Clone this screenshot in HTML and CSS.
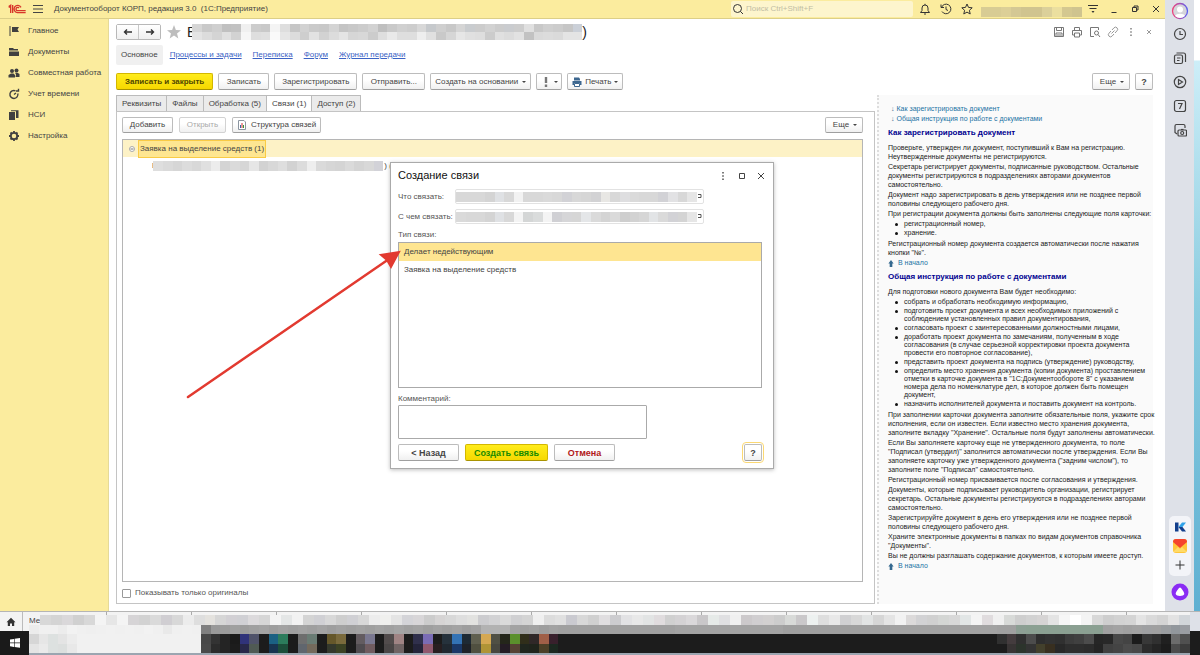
FILE: index.html
```html
<!DOCTYPE html>
<html lang="ru">
<head>
<meta charset="utf-8">
<title>Документооборот КОРП</title>
<link rel="stylesheet" href="styles.css">
</head>
<body>
<div class="screen">
  <div class="workspace">
    <div class="app">
      <header class="topbar">
        <svg class="logo" viewBox="0 0 54 30" fill="none" stroke="#d8352a" stroke-width="4"><path d="M2 8l6-4v23M14 27V3M2 9h4"/><path d="M39 10a11 11 0 1 0-11 16h25"/><path d="M33 12a5 5 0 1 0-5 8h25"/></svg>
        <button class="icon-btn" aria-label="Меню"><svg class="i12" viewBox="0 0 12 12" stroke="#444" fill="none"><path d="M1 2.500h10M1 6h10M1 9.500h10"/></svg></button>
        <h1 class="app-title">Документооборот КОРП, редакция 3.0&nbsp; (1С:Предприятие)</h1>
        <label class="search"><svg class="i12" viewBox="0 0 12 12" stroke="#333" fill="none"><circle cx="5.500" cy="5.500" r="4"/><path d="M8.500 8.500l2.500 2.500"/></svg><input type="text" placeholder="Поиск Ctrl+Shift+F" aria-label="Поиск"></label>
        <div class="top-icons">
          <button class="icon-btn" aria-label="Уведомления"><svg class="i12" viewBox="0 0 12 12" stroke="#333" fill="none"><path d="M1.500 9.500h9L9 7.500V5a3 3 0 0 0-6 0v2.500zM6 .8V2M5 11h2"/></svg></button>
          <button class="icon-btn" aria-label="История"><svg class="i12" viewBox="0 0 12 12" stroke="#333" fill="none"><path d="M1.500 4.500A4.800 4.800 0 1 1 2 8.500M1 1.500v3h3M6 3.500v3l2 1"/></svg></button>
          <button class="icon-btn" aria-label="Избранное"><svg class="i12" viewBox="0 0 12 12" stroke="#333" fill="none"><path d="M6 1l1.500 3.400 3.700.4-2.800 2.500.8 3.700L6 9.100 2.800 11l.8-3.700L.8 4.800l3.700-.4z"/></svg></button>
        </div>
        <div class="mosaic user" data-rows="d8cc94 d8cc94 dccf97 d4c894 d0c48f d0c48f dbd09a ebdf9f d4c890 cfc48f"></div>
        <div class="win-icons">
          <button class="icon-btn" aria-label="Настройки"><svg class="i12" viewBox="0 0 12 12" stroke="#333" fill="#333"><path d="M1 2.500h10M2.500 5.500h7"/><path d="M4.500 8h3L6 10z" stroke="none"/></svg></button>
          <button class="icon-btn" aria-label="Свернуть"><svg class="i12" viewBox="0 0 12 12" stroke="#333" fill="none"><path d="M3.500 9.500h5"/></svg></button>
          <button class="icon-btn" aria-label="Восстановить"><svg class="i12" viewBox="0 0 12 12" stroke="#333" fill="none"><path d="M3.500 4.500h4v4h-4zM5 4V3h4v4H8"/></svg></button>
          <button class="icon-btn" aria-label="Закрыть"><svg class="i12" viewBox="0 0 12 12" stroke="#333" fill="none"><path d="M3 3l6 6M9 3l-6 6"/></svg></button>
        </div>
      </header>

      <div class="app-body">
        <nav class="sections">
          <a href="#"><svg class="i12" viewBox="0 0 12 12" fill="#404040"><path d="M1.500 1h1v10h-1zM4 2h7L9.500 4.500 11 7H4z"/></svg>Главное</a>
          <a href="#"><svg class="i12" viewBox="0 0 12 12" fill="#404040"><path d="M1 2h4l1 1h4v1.500H1zM1 5.500h10V10H1z"/></svg>Документы</a>
          <a href="#"><svg class="i12" viewBox="0 0 12 12" fill="#404040"><circle cx="4" cy="4" r="2"/><circle cx="8.500" cy="3.500" r="2"/><path d="M.5 10.500V8L3 6.500h2.500L7 8v2.500zM7.500 10h4V7L9.500 5.800H7L8 7.500z"/></svg>Совместная работа</a>
          <a href="#"><svg class="i12" viewBox="0 0 12 12" fill="none" stroke="#404040" stroke-width="1.400"><path d="M9.800 5.500A4 4 0 1 1 7.500 2.800M6 6.500L8 5M8 3h2.500V.8"/></svg>Учет времени</a>
          <a href="#"><svg class="i12" viewBox="0 0 12 12" fill="#404040"><path d="M1 3h6v8H1zM3 1.200h7.500V9H8V2.200H3z"/></svg>НСИ</a>
          <a href="#"><svg class="i12" viewBox="0 0 12 12" fill="none" stroke="#404040"><circle cx="6" cy="6" r="3.200" stroke-width="1.800"/><path stroke-width="1.800" d="M6 1v1.500M6 9.500V11M1 6h1.500M9.500 6H11M2.500 2.500l1 1M8.500 8.500l1 1M9.500 2.500l-1 1M3.500 8.500l-1 1"/></svg>Настройка</a>
        </nav>

        <main class="document">
          <div class="doc-head">
            <div class="history"><button aria-label="Назад"><svg class="i10" viewBox="0 0 10 10" stroke="#333" stroke-width="1.400" fill="none"><path d="M9 5H1.500M4 2.500L1.500 5 4 7.500"/></svg></button><button aria-label="Вперед"><svg class="i10" viewBox="0 0 10 10" stroke="#333" stroke-width="1.400" fill="none"><path d="M1 5h7.500M6 2.500L8.500 5 6 7.500"/></svg></button></div>
            <svg class="star" viewBox="0 0 12 12" fill="#bdbdbd"><path d="M6 0l1.600 4.200 4.400.2-3.400 2.800 1.100 4.300L6 9.100l-3.700 2.400 1.100-4.300L0 4.400l4.400-.2z"/></svg>
            <h2 class="doc-title"><span>В</span><span class="mosaic title-mask" data-rows="d6d6d6 c9c9c9 cfcfcf c0c0c0 c2c2c2 f0f0f0 cccccc c9c9c9 f4f4f4 dedede c6c6c6 d2d2d2 cacaca c8c8c8 d4d4d4 c4c4c4 c8c8c8 cccccc d2d2d2 bfbfbf c9c9c9 d0d0d0 cdcdcd d8d8d8 c6c9cc cfcfcf c8c8c8 d5d5d5 c9cccf cccccc d2d2d2 cccccc cacccf cdcdcd e0e0e0 c8c8c8 cfcfcf cccccc c6c6c6 cbd0d8|e4e4e4 dcdcdc d4d4d4 e0e0e0 d2d2d2 f6f6f6 dedede e0e0e0 fafafa e6e6e6 dcdcdc cecece e2e2e2 d2d2d2 dcdcdc e4e4e4 d6d6d6 d8d8d8 cccccc dedede e9e9e9 dedede dedede eeeeee e0e0e0 c9c9c9 d6d6d6 e6e6e6 e0e0e0 dedede cccccc e0e0e0 dcdcdc e2e2e2 c2c2c2 dadada dcdcdc dadada e4e4e4 e4e4e4"></span><span>)</span></h2>
            <div class="doc-icons">
              <button class="icon-btn" aria-label="Сохранить"><svg class="i12" viewBox="0 0 12 12" stroke="#777" fill="none"><path d="M1.500 1.500h9v9h-9zM3.500 1.500v3h5v-3M3 10.500V7h6v3.500M4 9h4"/></svg></button>
              <button class="icon-btn" aria-label="Печать"><svg class="i12" viewBox="0 0 12 12" stroke="#777" fill="none"><path d="M3.500 4V1.500h5V4M3 9H1.500V4.500h9V9H9M3.500 7h5v4h-5z"/></svg></button>
              <button class="icon-btn" aria-label="Просмотр"><svg class="i12" viewBox="0 0 12 12" stroke="#777" fill="none"><path d="M5 10.500H1.500v-9h8V4"/><circle cx="7.500" cy="7" r="2"/><path d="M9 8.500l2 2.500"/></svg></button>
              <button class="icon-btn" aria-label="Ссылка"><svg class="i12" viewBox="0 0 12 12" stroke="#999" fill="none"><path d="M5 4l2-2.200a2 2 0 0 1 3 3L8 7M7 8l-2 2.200a2 2 0 0 1-3-3L4 5M4.500 7.500l3-3"/></svg></button>
              <button class="icon-btn" aria-label="Еще"><svg class="i12" viewBox="0 0 12 12" fill="#777"><path d="M5.300 2h1.400v1.400H5.300zM5.300 5.300h1.400v1.400H5.300zM5.300 8.600h1.400V10H5.300z"/></svg></button>
              <button class="icon-btn" aria-label="Закрыть документ"><svg class="i12" viewBox="0 0 12 12" stroke="#999" fill="none"><path d="M4 4l4 4M8 4l-4 4"/></svg></button>
            </div>
          </div>

          <nav class="links">
            <span class="current">Основное</span><a href="#">Процессы и задачи</a><a href="#">Переписка</a><a href="#">Форум</a><a href="#">Журнал передачи</a>
          </nav>

          <div class="commands">
            <button class="btn primary">Записать и закрыть</button>
            <button class="btn w-s">Записать</button>
            <button class="btn w-l">Зарегистрировать</button>
            <button class="btn w-m">Отправить...</button>
            <button class="btn tight">Создать на основании<i class="caret"></i></button>
            <button class="btn tight flag" aria-label="Важность"><svg class="i10" viewBox="0 0 10 10" fill="#777"><path d="M3.800 0h2.400v6H3.800zM3.800 7.500h2.400V10H3.800z"/></svg><i class="caret"></i></button>
            <button class="btn tight print"><svg class="i10" viewBox="0 0 10 10" fill="#3d678f"><path d="M2 .5h5L8 2v1.500H2zM.5 4h9v4H8V6H2v2H.5z"/><path d="M2.500 6.500h5v3h-5z" fill="#fff" stroke="#3d678f"/></svg>Печать<i class="caret"></i></button>
            <span class="grow"></span>
            <button class="btn tight more">Еще<i class="caret"></i></button>
            <button class="btn help-btn">?</button>
          </div>

          <div class="columns">
            <section class="pages">
              <div class="tabs" role="tablist">
                <button role="tab">Реквизиты</button><button role="tab">Файлы</button><button role="tab">Обработка (5)</button><button role="tab" class="active" aria-selected="true">Связи (1)</button><button role="tab">Доступ (2)</button>
              </div>
              <div class="page">
                <div class="page-tools">
                  <button class="btn w-s">Добавить</button>
                  <button class="btn w-xs" disabled>Открыть</button>
                  <button class="btn tight"><svg class="i10" viewBox="0 0 10 10" fill="none"><path d="M1.500.5H7L8.500 2v7.500h-7z" fill="#fff" stroke="#8b95a0"/><path d="M3.500 8V5" stroke="#3566a8"/><path d="M5 8V3" stroke="#c33"/><path d="M6.500 8V5" stroke="#393"/></svg>Структура связей</button>
                  <span class="grow"></span>
                  <button class="btn tight more">Еще<i class="caret"></i></button>
                </div>
                <div class="tree">
                  <div class="tree-row"><svg class="collapse" viewBox="0 0 8 8" fill="#fff" stroke="#aaa"><circle cx="4" cy="4" r="2.500"/><path d="M2.500 4h3" stroke="#777"/></svg><span class="group">Заявка на выделение средств (1)</span></div>
                  <div class="tree-child"><span>В</span><span class="mosaic child-mask" data-rows="dedede dadada d6d6d6 dcdcdc d8d8d8 e0e0e0 ececec d4d4d4 dadada d6d6d6 e6e6e6 d2d2d2 d8d8d8 dedede d2d2d2 dcdcdc eeeeee dadada d6d6d6 d4d4d4 dadada d4d4d4 d8d8d8 d2d2d8"></span><span>) (До</span></div>
                </div>
                <label class="check"><input type="checkbox">Показывать только оригиналы</label>
              </div>
            </section>

            <aside class="help">
              <ul class="toc"><li><a href="#how">Как зарегистрировать документ</a></li><li><a href="#common">Общая инструкция по работе с документами</a></li></ul>
              <h3 id="how">Как зарегистрировать документ</h3>
              <p>Проверьте, утвержден ли документ, поступивший к Вам на регистрацию.<br>Неутвержденные документы не регистрируются.</p>
              <p>Секретарь регистрирует документы, подписанные руководством. Остальные<br>документы регистрируются в подразделениях авторами документов<br>самостоятельно.</p>
              <p>Документ надо зарегистрировать в день утверждения или не позднее первой<br>половины следующего рабочего дня.</p>
              <p>При регистрации документа должны быть заполнены следующие поля карточки:</p>
              <ul class="list"><li>регистрационный номер,</li><li>хранение.</li></ul>
              <p>Регистрационный номер документа создается автоматически после нажатия<br>кнопки "№".</p>
              <a class="up" href="#"><svg viewBox="0 0 6 8" fill="#35698f"><path d="M3 0l3 4H4.500v4h-3V4H0z"/></svg>В начало</a>
              <h3 id="common">Общая инструкция по работе с документами</h3>
              <p>Для подготовки нового документа Вам будет необходимо:</p>
              <ul class="list">
                <li>собрать и обработать необходимую информацию,</li>
                <li>подготовить проект документа и всех необходимых приложений с<br>соблюдением установленных правил документирования,</li>
                <li>согласовать проект с заинтересованными должностными лицами,</li>
                <li>доработать проект документа по замечаниям, полученным в ходе<br>согласования (в случае серьезной корректировки проекта документа<br>провести его повторное согласование),</li>
                <li>представить проект документа на подпись (утверждение) руководству,</li>
                <li>определить место хранения документа (копии документа) проставлением<br>отметки в карточке документа в "1С:Документообороте 8" с указанием<br>номера дела по номенклатуре дел, в которое должен быть помещен<br>документ,</li>
                <li>назначить исполнителей документа и поставить документ на контроль.</li>
              </ul>
              <p>При заполнении карточки документа заполните обязательные поля, укажите срок<br>исполнения, если он известен. Если известно место хранения документа,<br>заполните вкладку "Хранение". Остальные поля будут заполнены автоматически.</p>
              <p>Если Вы заполняете карточку еще не утвержденного документа, то поле<br>"Подписал (утвердил)" заполнится автоматически после утверждения. Если Вы<br>заполняете карточку уже утвержденного документа ("задним числом"), то<br>заполните поле "Подписал" самостоятельно.</p>
              <p>Регистрационный номер присваивается после согласования и утверждения.</p>
              <p>Документы, которые подписывает руководитель организации, регистрирует<br>секретарь. Остальные документы регистрируются в подразделениях авторами<br>самостоятельно.</p>
              <p>Зарегистрируйте документ в день его утверждения или не позднее первой<br>половины следующего рабочего дня.</p>
              <p>Храните электронные документы в папках по видам документов справочника<br>"Документы".</p>
              <p>Вы не должны разглашать содержание документов, к которым имеете доступ.</p>
              <a class="up" href="#"><svg viewBox="0 0 6 8" fill="#35698f"><path d="M3 0l3 4H4.500v4h-3V4H0z"/></svg>В начало</a>
            </aside>
          </div>
        </main>
      </div>

      <section class="dialog" role="dialog" aria-labelledby="dlg-title">
        <div class="dlg-head">
          <h2 id="dlg-title">Создание связи</h2>
          <button class="icon-btn" aria-label="Еще"><svg class="i12" viewBox="0 0 12 12" fill="#444"><path d="M5.300 2h1.400v1.400H5.300zM5.300 5.300h1.400v1.400H5.300zM5.300 8.600h1.400V10H5.300z"/></svg></button>
          <button class="icon-btn" aria-label="Развернуть"><svg class="i12" viewBox="0 0 12 12" fill="none" stroke="#444"><path d="M3.500 3.500h5v5h-5z"/></svg></button>
          <button class="icon-btn" aria-label="Закрыть"><svg class="i12" viewBox="0 0 12 12" fill="none" stroke="#444"><path d="M3 3l6 6M9 3l-6 6"/></svg></button>
        </div>
        <div class="dlg-fields">
          <span>Что связать:</span>
          <div class="field"><div class="mosaic field-mask" data-rows="d8d8d8 d8d8d8 d8d8d8 d4d4d4 dfe1e4 d8d8d8 f2f2f2 d8d8d8 d8d8d8 dadada d8d8d8 d2d2d6 d8d8d8 d6d6d6 d2d2d4 e8e7e4 d8d8d8 dedee0 dadada d8d8d8 d8d8d8 d2d2d6 e2e2e4 d8d8d8 e6e6e6"></div><svg class="open" viewBox="0 0 6 8" fill="none" stroke="#555"><path d="M1 1.500h3v3H1"/></svg></div>
          <span>С чем связать:</span>
          <div class="field"><div class="mosaic field-mask" data-rows="dadada d8d8d8 d8d8d8 d4d4d4 dfe1e4 d8d8d8 f4f4f4 d4d6d6 dadcdc f4f4f4 d0d0d4 d6d6d8 d6d6d6 e4e6e8 dadada d4d4d4 dadada cecece d2d2d2 d6d6d6 e2e4e6 dadada d2d2d6 d4d4d4 e6e6e6"></div><svg class="open" viewBox="0 0 6 8" fill="none" stroke="#555"><path d="M1 1.500h3v3H1"/></svg></div>
        </div>
        <div class="dlg-label">Тип связи:</div>
        <ul class="types" role="listbox"><li role="option" aria-selected="true">Делает недействующим</li><li role="option">Заявка на выделение средств</li></ul>
        <label class="dlg-label" for="comment">Комментарий:</label>
        <textarea id="comment"></textarea>
        <div class="dlg-actions">
          <button class="btn wide">&lt; Назад</button>
          <button class="btn primary create">Создать связь</button>
          <button class="btn wide cancel">Отмена</button>
          <span class="grow"></span>
          <button class="btn help-btn focused">?</button>
        </div>
      </section>
      <svg class="pointer" viewBox="0 0 220 154"><path d="M4 149L205 11" stroke="#e23a30" stroke-width="2.500" stroke-linecap="round"/><path d="M215 4l-8 15-4-7-6-5z" fill="#e23a30" stroke="#e23a30" stroke-width="2"/></svg>
    </div>

    <aside class="browser">
      <svg class="avatar" viewBox="0 0 18 18"><defs><linearGradient id="ring"><stop offset="0" stop-color="#f0427a"/><stop offset="1" stop-color="#5b5ff0"/></linearGradient></defs><circle cx="9" cy="9" r="7.500" fill="#d5d5da" stroke="url(#ring)" stroke-width="1.300"/><circle cx="9" cy="7.500" r="3" fill="#fff"/><path d="M4 14c1-3 9-3 10 0-3 2.500-7 2.500-10 0z" fill="#fff"/></svg>
      <svg class="i14" viewBox="0 0 14 14" fill="none" stroke="#444" stroke-width="1.200"><circle cx="7" cy="7" r="5.500"/><path d="M7 4v3.500h3"/></svg>
      <svg class="i14" viewBox="0 0 14 14" fill="none" stroke="#444" stroke-width="1.200"><rect x="1.500" y="4" width="8" height="8.500" rx="1.500"/><path d="M3.500 2h7q2 0 2 2v7M4 7h3.500M4 9.500h2.500"/></svg>
      <svg class="i14" viewBox="0 0 14 14" fill="none" stroke="#444" stroke-width="1.200"><circle cx="7" cy="7" r="5.700"/><path d="M5.500 4.500v5L9.500 7z"/></svg>
      <svg class="i14" viewBox="0 0 14 14" fill="none" stroke="#444" stroke-width="1.200"><rect x="1.500" y="1.500" width="11" height="11" rx="2"/><path d="M5 4.500h4L6.500 10"/></svg>
      <svg class="i14" viewBox="0 0 14 14" fill="none" stroke="#444" stroke-width="1.200"><path d="M4 11l-2-1.500V3q0-1.500 1.500-1.500h7Q12 1.500 12 3v2"/><rect x="5" y="7" width="8.500" height="6" rx="1"/><circle cx="9.200" cy="10" r="1.500"/><path d="M8 6.500h2.500"/></svg>
      <span class="grow"></span>
      <div class="dock">
        <svg class="i12" viewBox="0 0 12 12"><path d="M1 1.500h3.500v9H1z" fill="#123e8c"/><path d="M8 1.500h4L8.500 6H4.500z" fill="#2fa1e8"/><path d="M4.500 6h4l3.500 4.500H8z" fill="#123e8c"/></svg>
        <svg class="i16" viewBox="0 0 16 16"><rect x="1" y="1" width="14" height="14" rx="3" fill="#ffc53a"/><path d="M1 4q0-3 3-3h8q3 0 3 3L8 10z" fill="#f5442d"/><path d="M1 14l5-5 2 2 2-2 5 5z" fill="#ffdb68"/></svg>
        <svg class="i12" viewBox="0 0 12 12" stroke="#333"><path d="M6 1.500v9M1.500 6h9"/></svg>
      </div>
      <svg class="avatar" viewBox="0 0 18 18"><circle cx="9" cy="9" r="8.500" fill="#8a2cf4"/><path d="M9 4.500c1.200 0 4.500 5 4.300 6.500-.3 2.600-8.300 2.600-8.600 0C4.500 9.500 7.800 4.500 9 4.500z" fill="#fff"/></svg>
    </aside>
    <div class="desktop"></div>
  </div>

  <footer class="bottom">
    <div class="corner">
      <button class="home" aria-label="Начальная страница"><svg class="i10" viewBox="0 0 10 10" fill="#333"><path d="M5 .8l4.500 4.400H8.200V9H6V6.500H4V9H1.800V5.200H.5z"/></svg></button>
      <button class="start" aria-label="Пуск"><svg class="i12" viewBox="0 0 12 12" fill="#fff"><path d="M1 2.500l4-.6v3.700H1zM5.600 1.800L11 1v4.600H5.600zM1 6.200h4v3.700l-4-.6zM5.600 6.200H11v4.600l-5.400-.8z"/></svg></button>
    </div>
    <div class="bars">
      <div class="windows"><span class="window-name">Ме</span><div class="mosaic windows-mask" data-rows="d8d8d8 d4d4d4 dad8da d0d0d0 d8d8d8 f4f4f4 e6e6e6 f4f4f4 d6d4d6 d2d2d2 dadada d0ced2 d8d8d8 ececec dedede e4e2de d6d6d6 d2d0d4 d0d0d4 dcdadc d6d6d6 f4f4f4 e4e6e6 f2f2f2 d4d4d4 d0d0d4 d8d8d8 cecece d0d0d4 d8d8d8 ececec f0f0ee e4e4e4 d4d4d8 d8d6d8 cccccc d6d4d4 d8d8d8 dedede e2e2e0 cccccf d2d2d4 dadada d0d0d2 d4d4d4 f0f0f0 dcdcdc e0e0e0 cacad0 d8d8d8 d0d0d0 e0dee0 cccccf e2e2e4 e8e8e8 e2e4e4 e0dcde d0d0d0 d4d2d4 dad8da c9c7c9 e6eae8 e0e0e2 f0f0f0 ccc9cb d0ced0 d2d0d0 cccccc d8dad8 cac8ca edf1f0 dedede e8e8e8 d0d0d2 d8d8d8 e2e4e4 d6d6d6 e4e4e4 f2f2f2 dcdada d2d2d4 d0d0d0 d4d6d4 d8d8d8 e2e6e6 f4f4f4 e0dcde f0f0f0 d8dad8 cecece d2d2d2 d6d4d4 e4e4e4 f6f6f6 ffffff f4f4f4 d8d8d8 cecece d2d2d2 d4d4d4 e4e4e4 dadada d4d4d4 e2e2e2 d2d6da"></div></div>
      <div class="taskbar">
        <div class="mosaic task-search" data-rows="ececec f0f0f0 f0f0f0 ececec f2f2f2 f0f0f0 efefef f0f0f0 f1f1f1 f0f0f0 f1f1f1 f0f0f0 f2f2f2 f0f0f0 e9e9e9 f0f0f0 f1f1f1 f0f0f0|d6d6d6 e6e6e6 dde1e0 e4e4e4 ececec f1f1f1 f1f1f1 f1f1f1 f1f1f1 f1f1f1 f1f1f1 f1f1f1 f1f1f1 f1f1f1 f1f1f1 f1f1f1 f1f1f1 f1f1f1|e4e4e4 eaeaea dde1e0 dcdfde e8e8e8 f1f1f1 f1f1f1 f1f1f1 f1f1f1 f1f1f1 f1f1f1 f1f1f1 f1f1f1 f1f1f1 f1f1f1 f1f1f1 f1f1f1 f1f1f1"></div>
        <div class="mosaic task-apps" data-rows="808080 999999 9c9c9c a0a0a0 9c9c9c a0a0a0 a3a3a3 9e9e9e a2a2a2 9f9f9f a2a2a2 9f9f9f a3a3a3 9e9e9e a2a2a2 9f9f9f a2a2a2 9f9f9f a3a3a3 a0a0a0 a4a4a4 a0a0a0 a3a3a3 9f9f9f a3a3a3 a0a0a0 a3a3a3 9e9e9e a2a2a2 b2b2b2 b2b2b2 b2b2b2 a3a3a3 a0a0a0 a3a3a3 9e9e9e a2a2a2 a0a0a0|484848 333333 242424 1a1a1a 30337a 50536a 1c1c1c 1b6183 2c7c5c 1b1b1b 6e6e6e 6a7c74 1c1c1c 65572a 7a6a3c 1c1c1c 635c60 7a7890 1c1c1c 524c4c a08484 1c1c1c 30304c 7a6cb5 1c1c1c 26323c 3373b5 1e2a34 606050 d5a852 505044 24261a 5b902c 302e1a 302828 a05f48 38202c 1c1c1c|4a4a4a 2c2c2c 242424 1c1c1c 28284a 505a54 1c1c1c 183450 1c4e3a 1b1b1b 60666e 746a5c 1c1c1c 34382c 3c4224 1c1c1c 504c50 705c60 1c1c1c 4a4646 706464 1c1c1c 24243a 90586e 281e20 202830 1a3868 1e2228 505040 b09436 484840 241c24 564234 20261e 20241c 4c4028 1c2820 1c1c1c"></div>
        <div class="mosaic task-empty" data-rows="a0a0a0 a3a3a3 9f9f9f a2a2a2|1c1c1c 1c1c1c 1c1c1c 1c1c1c|1c1c1c 1c1c1c 1c1c1c 1c1c1c"></div>
        <div class="mosaic task-tray" data-rows="a0a0a0 a0a0a0 8d9f94 8ba092 8ba092 8ba092 8ba092 8ba092 8ba092 8ba092 8ba092 a0a0a0 a3a3a3 a0a0a0 a2a2a2 9fa0a2 a0a0a0 9a9da0 92979c 9a9da2|303030 443c3e 303030 4c4c4c 2e2e2e 323232 303030 3c3c3c 404040 4c4c4c 262626 282828 484848 444444 1c1c1c 383838 303030 202020 6c6c6c 505050|1c1c1c 383434 2c342c 343434 43402c 382f20 282828 2e2e2e 2e2e2e 2c2c2c 242424 404040 444444 4c4c4c 484848 2c2c2c 242424 1c1c1c 4c4c4c 3c3c3c"></div>
      </div>
    </div>
    <div class="edge"></div>
  </footer>
</div>
<script src="mosaic.js"></script>
</body>
</html>
```

FILE: styles.css
```css
* { box-sizing: border-box; }
body { margin: 0; font: 8px/10px "Liberation Sans", Arial, sans-serif; color: #444; background: #fff; }
button, input, textarea { font: inherit; color: inherit; }
button { padding: 0; cursor: pointer; }
h1, h2, h3, p, ul { margin: 0; padding: 0; font-weight: normal; }
ul { list-style: none; }
svg { display: block; flex: none; }
.grow { flex: 1; }
.i10 { width: 10px; height: 10px; }
.i12 { width: 12px; height: 12px; }
.i14 { width: 14px; height: 14px; }
.i16 { width: 16px; height: 16px; }
.icon-btn { border: 0; background: none; }

.screen { min-height: 100vh; display: flex; flex-direction: column; }
.workspace { flex: 1; display: flex; }
.app { flex: 1; min-width: 0; position: relative; display: flex; flex-direction: column; }
.app-body { flex: 1; display: flex; }

/* blurred-out private data */
.mosaic { display: flex; flex-direction: column; overflow: hidden; }
.mosaic-row { flex: 1; display: flex; }
.mosaic-row i { flex: 1; }

.topbar { height: 19px; display: flex; align-items: center; background: #fbec9e; border-bottom: 1px solid #dccf88; padding: 0 3px 0 8px; }
.logo { width: 18px; height: 10px; margin-right: 6px; }
.app-title { font-size: 8px; margin-left: 10px; flex: 1; }
.search { display: flex; align-items: center; gap: 2px; flex: none; width: 182px; height: 16px; padding-left: 1px; background: #fdf5cd; border-radius: 2px; }
.search input { border: 0; background: none; flex: 1; min-width: 0; padding: 0; outline: 0; }
.search input::placeholder { color: #c2bda4; opacity: 1; }
.top-icons { display: flex; gap: 9px; margin: 0 8px 0 6px; }
.user { width: 101px; height: 10px; margin-top: 6px; }
.win-icons { display: flex; gap: 9px; margin-left: 5px; }

.sections { width: 109px; padding: 1px 0 0 8px; background: #fbec9e; border-right: 1px solid #e5da98; }
.sections a { display: flex; align-items: center; gap: 8px; height: 21px; color: #444; text-decoration: none; }

.document { flex: 1; min-width: 0; display: flex; flex-direction: column; padding: 4px 12px 7px 7px; }
.doc-head { display: flex; align-items: center; height: 17px; }
.history { display: flex; width: 45px; height: 16px; border: 1px solid #b8b8b8; border-radius: 2px; }
.history button { flex: 1; display: flex; align-items: center; justify-content: center; border: 0; background: linear-gradient(#fff, #f0f0f0); }
.history button + button { border-left: 1px solid #c8c8c8; }
.star { width: 14px; height: 14px; margin: 0 6px; }
.doc-title { display: flex; align-items: center; flex: 1; color: #222; font-size: 14px; line-height: 16px; }
.title-mask { width: 390px; height: 16px; margin-left: -4px; }
.doc-icons { display: flex; gap: 6px; margin-right: -2px; }

.links { display: flex; align-items: center; gap: 11px; height: 20px; margin-top: 5px; }
.links a { color: #3b62c4; }
.current { background: #f0f0f0; border-radius: 2px; padding: 5px; margin-right: -4px; }

.commands { display: flex; gap: 5px; margin-top: 8px; height: 17px; }
.btn { display: inline-flex; align-items: center; justify-content: center; gap: 4px; height: 17px; padding: 0 8px; border: 1px solid #bcbcbc; border-bottom-color: #9f9f9f; border-radius: 2px; background: linear-gradient(#fff 40%, #f0f0f0); white-space: nowrap; color: #444; }
.btn.primary { font-weight: bold; color: #4f4600; background: linear-gradient(#ffec1c, #f6d800); border-color: #d3b700; border-bottom-color: #a99300; }
.w-xs, .w-s, .w-m, .w-l { padding: 0; }
.w-xs { width: 47px; }
.w-s { width: 51px; }
.w-m { width: 63px; }
.w-l { width: 83px; }
.btn.tight { padding: 0 4px; }
.btn.flag { width: 26px; gap: 3px; padding: 0 2px; }
.btn.print { width: 56px; gap: 3px; padding: 0; }
.btn.more { width: 38px; padding-left: 6px; }
.btn:disabled { color: #aaa; border-color: #d2d2d2; }
.btn.help-btn { width: 18px; padding: 0; font-size: 9px; font-weight: bold; }
.caret { border: 2px solid transparent; border-top-color: #444; border-bottom: 0; }

.columns { flex: 1; display: flex; margin-top: 5px; }
.pages { flex: 1; min-width: 0; display: flex; flex-direction: column; margin-right: 2px; }
.tabs { display: flex; height: 17px; margin-bottom: -1px; }
.tabs button { padding: 0 5px; border: 1px solid #bbb; border-right: 0; background: #ebebeb; }
.tabs button:last-child { border-right: 1px solid #bbb; }
.tabs .active { background: #fff; border-bottom-color: #fff; }
.page { flex: 1; display: flex; flex-direction: column; border: 1px solid #c4c4c4; padding: 5px 11px 5px 5px; }
.page-tools { display: flex; gap: 6px; }
.page-tools .btn { height: 16px; }
.tree { flex: 1; margin-top: 6px; border: 1px solid #b5b5b5; }
.tree-row { display: flex; align-items: center; height: 17px; background: #fdf2c6; }
.collapse { width: 8px; height: 8px; margin: 0 2px 0 5px; }
.group { border: 1px solid #f9cb45; background: #fee691; padding: 2px 1px; line-height: 12px; }
.tree-child { display: flex; align-items: center; height: 18px; padding-left: 29px; white-space: nowrap; }
.child-mask { width: 230px; height: 10px; margin-left: -4px; margin-right: 1px; }
.check { display: flex; align-items: center; gap: 4px; margin-top: 6px; color: #555; }
.check input { appearance: none; width: 9px; height: 9px; margin: 0; border: 1px solid #999; border-radius: 1px; background: #fff; }

.help { width: 276px; flex: none; padding: 9px 0 0 9px; border-left: 2px dotted #ddd; background: #fafafa; color: #222; font-size: 7px; line-height: 9px; white-space: nowrap; }
.help a { color: #1a72a4; text-decoration: none; }
.toc { padding-left: 3px; }
.toc li { line-height: 10px; }
.toc li::before { content: "↓"; color: #35698f; margin-right: 2px; }
.help h3 { color: #000090; font-size: 8px; line-height: 10px; font-weight: bold; margin: 4px 0 5px; }
.help p { margin-bottom: 1px; }
.list { padding: 1px 0 1px 16px; }
.list li { position: relative; line-height: 8px; margin-bottom: 1px; }
.list li::before { content: ""; position: absolute; left: -9px; top: 3px; width: 3px; height: 3px; border-radius: 50%; background: #111; }
.up { display: flex; align-items: center; gap: 4px; line-height: 10px; }
.up svg { width: 6px; height: 7px; }

.dialog { position: absolute; left: 390px; top: 162px; width: 384px; padding: 5px 7px 7px; background: #fff; border: 1px solid #aaa; box-shadow: 0 1px 4px #0004; display: flex; flex-direction: column; }
.dlg-head { display: flex; align-items: center; gap: 7px; height: 15px; margin-right: -1px; }
.dlg-head h2 { flex: 1; color: #111; font-size: 11px; line-height: 13px; }
.dlg-fields { display: grid; grid-template-columns: 57px 249px; row-gap: 5px; margin-top: 6px; line-height: 15px; color: #555; white-space: nowrap; }
.field { display: flex; align-items: center; height: 15px; border: 1px solid #e2e2e2; border-radius: 2px; }
.field-mask { flex: 1; height: 10px; }
.open { width: 6px; height: 8px; }
.dlg-label { margin-top: 6px; color: #555; }
.types { height: 146px; margin: 2px 4px 0 0; border: 1px solid #aaa; }
.types li { height: 18px; line-height: 18px; padding-left: 5px; }
.types [aria-selected] { background: #fee591; }
textarea { display: block; width: 249px; height: 34px; margin: 1px 0 5px; border: 1px solid #aaa; border-radius: 1px; resize: none; outline: 0; }
.dlg-actions { display: flex; gap: 6px; margin-right: 4px; }
.dlg-actions .btn { font-weight: bold; font-size: 9px; }
.dlg-actions .wide { width: 61px; }
.dlg-actions .create { width: 83px; color: #198a00; }
.dlg-actions .cancel { color: #b01818; }
.focused { outline: 1px solid #fbd873; outline-offset: 1px; }
.pointer { position: absolute; left: 184px; top: 248px; width: 220px; height: 154px; pointer-events: none; }

.browser { width: 29px; background: #dee1e8; display: flex; flex-direction: column; align-items: center; gap: 10px; padding: 2px 0 10px; }
.avatar { width: 18px; height: 18px; }
.browser .avatar:first-child { margin-bottom: -3px; }
.dock { width: 22px; padding: 5px 0; display: flex; flex-direction: column; align-items: center; gap: 5px; background: #f3f4f8; border-radius: 5px; margin-bottom: -3px; }
.desktop { width: 6px; background: linear-gradient(#fff 60px, #cdeef8 61px, #8ccde0 50%, #5fb0d2); }

.bottom { display: flex; height: 44px; border-top: 1px solid #b5b5b5; background: #f3f3f3; }
.corner { width: 29px; display: flex; flex-direction: column; }
.home { width: 23px; height: 19px; border: 0; border-right: 1px solid #bbb; background: none; display: flex; align-items: center; justify-content: center; }
.start { flex: 1; border: 0; background: #1a1a1a; display: flex; align-items: center; justify-content: center; }
.bars { flex: 1; min-width: 0; display: flex; flex-direction: column; }
.windows { display: flex; align-items: flex-end; height: 13px; background: repeating-linear-gradient(90deg, transparent 0 77px, #aaa 77px 78px, transparent 78px 85px) top / 100% 3px no-repeat; }
.window-name { line-height: 9px; }
.windows-mask { flex: 1; height: 10px; }
.taskbar { flex: 1; display: flex; border-bottom: 2px solid #9ba5b0; }
.task-search { width: 172px; }
.task-apps { width: 367px; }
.task-empty { flex: 1; }
.task-tray { width: 193px; }
.edge { width: 10px; background: linear-gradient(#dee1e8 19px, #1c1c1c 19px); }
```

FILE: mosaic.js
```js
document.querySelectorAll(".mosaic").forEach(function (box) {
  box.dataset.rows.split("|").forEach(function (colours) {
    var row = document.createElement("span");
    row.className = "mosaic-row";
    colours.trim().split(/\s+/).forEach(function (c) {
      var cell = document.createElement("i");
      cell.style.background = "#" + c;
      row.appendChild(cell);
    });
    box.appendChild(row);
  });
});
```
